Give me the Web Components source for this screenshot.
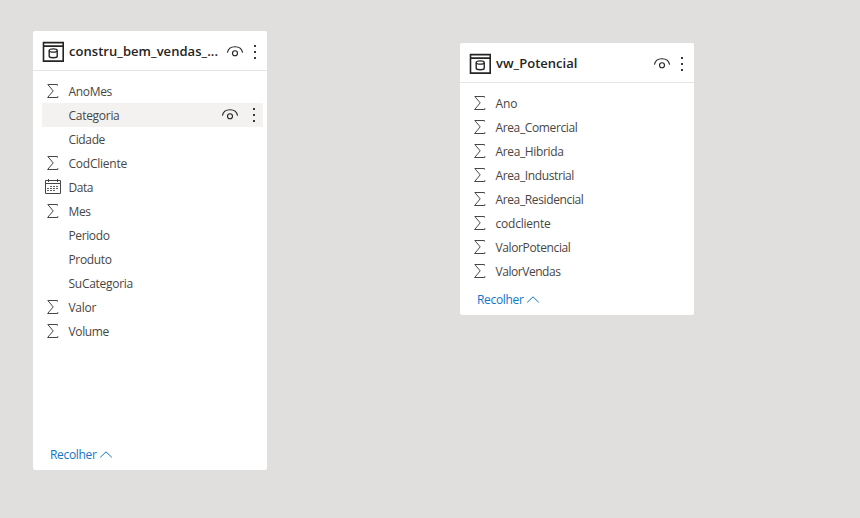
<!DOCTYPE html>
<html lang="pt">
<head>
<meta charset="utf-8">
<title>Modelo</title>
<style>
body{margin:0;background:#e0dfdd;height:518px;overflow:hidden;font-family:"Open Sans","Noto Sans",sans-serif;font-size:12px;color:#484644}
model-canvas{height:518px}
</style>
</head>
<body>
<model-canvas>
<table-card style="--x:33px;--y:31px;--h:439px" name="constru_bem_vendas_..." name-width="149">
<field-row kind="sum" w="43.5">AnoMes</field-row>
<field-row active w="51">Categoria</field-row>
<field-row w="36.5">Cidade</field-row>
<field-row kind="sum" w="58.5">CodCliente</field-row>
<field-row kind="date" w="24.5">Data</field-row>
<field-row kind="sum" w="22">Mes</field-row>
<field-row w="41">Periodo</field-row>
<field-row w="43">Produto</field-row>
<field-row w="64.5">SuCategoria</field-row>
<field-row kind="sum" w="27.5">Valor</field-row>
<field-row kind="sum" w="40.5">Volume</field-row>
</table-card>
<table-card style="--x:460px;--y:43px;--h:272px" name="vw_Potencial" name-width="81.5">
<field-row kind="sum" w="22">Ano</field-row>
<field-row kind="sum" w="82">Area_Comercial</field-row>
<field-row kind="sum" w="68">Area_Hibrida</field-row>
<field-row kind="sum" w="78.5">Area_Industrial</field-row>
<field-row kind="sum" w="88">Area_Residencial</field-row>
<field-row kind="sum" w="55">codcliente</field-row>
<field-row kind="sum" w="75">ValorPotencial</field-row>
<field-row kind="sum" w="65">ValorVendas</field-row>
</table-card>
</model-canvas>
<script>
const ICONS = {
  table: [22,22,'<g fill="none" stroke="#252423" stroke-width="1.6"><path d="M1.5 1.6H21.2V20.1H1.5ZM1.5 5.1H21.2"/><path stroke-width="1.4" d="M7.2 9.6V15.2C7.2 17.2 15.2 17.2 15.2 15.2V9.6"/><ellipse cx="11.2" cy="9.5" rx="4" ry="1.7" stroke-width="1.3"/></g>'],
  eye: [18,14,'<g fill="none" stroke="#252423" stroke-width="1.15"><path d="M1.4 7.7C3-.2 15-.2 16.6 7.7"/><circle cx="9" cy="8.2" r="2.5"/></g>'],
  dots: [4,16,'<path fill="#252423" d="M1.1 1h1.8v2H1.1zM1.1 7h1.8v2H1.1zM1.1 13h1.8v2H1.1z"/>'],
  sum: [16,16,'<path fill="none" stroke="#484644" d="M12.4 2.6V1.5H2.8L8.2 7.9 2.6 14.5H12.8V13.2"/>'],
  date: [18,16,'<g fill="none" stroke="#484644"><path d="M1.5 1.5H16.5V14.5H1.5ZM1.5 4.5H16.5M4.5 0V3M13.5 0V3"/><path stroke="#605e5c" stroke-dasharray="2 1" d="M6 7.5H14M3 9.5H14M3 11.5H12"/></g>'],
  up: [14,9,'<path fill="none" stroke="#1276c9" d="M1.2 7.4 7 1.8 12.8 7.4"/>']
};
class UiIcon extends HTMLElement {
  connectedCallback() {
    const [w,h,body] = ICONS[this.getAttribute('name')];
    this.attachShadow({mode:'open'}).innerHTML = `<style>:host{display:block;flex:none;width:${w}px;height:${h}px}svg{display:block}</style><svg width="${w}" height="${h}" viewBox="0 0 ${w} ${h}">${body}</svg>`;
  }
}
/* A label whose tracking is tuned so its text takes the given width. */
class FitLabel extends HTMLElement {
  connectedCallback() {
    this.attachShadow({mode:'open'}).innerHTML = '<style>:host{display:block;flex:none;white-space:nowrap}span{display:inline-block}</style><span></span>';
    const s = this.shadowRoot.querySelector('span');
    s.textContent = this.getAttribute('text');
    const gap = +this.getAttribute('w') - s.getBoundingClientRect().width;
    s.style.letterSpacing = gap / s.textContent.length + 'px';
  }
}
class FieldRow extends HTMLElement {
  connectedCallback() {
    const kind = this.getAttribute('kind'), active = this.hasAttribute('active');
    this.attachShadow({mode:'open'}).innerHTML = `<style>
      :host{display:flex;align-items:center;height:24px;margin:0 4px 0 9px;box-sizing:border-box;padding-right:7px}
      :host([active]){background:#f3f2f1}
      .kind{width:18px;margin:0 6.5px 0 2px;display:flex;justify-content:center}
      .grow{flex:1}.dots{margin-left:13px}
      </style><div class="kind">${kind ? `<ui-icon name="${kind}"></ui-icon>` : ''}</div>
      <fit-label text="${this.textContent}" w="${this.getAttribute('w')}"></fit-label>
      ${active ? '<div class="grow"></div><ui-icon name="eye"></ui-icon><ui-icon class="dots" name="dots"></ui-icon>' : ''}`;
  }
}
class TableCard extends HTMLElement {
  connectedCallback() {
    this.attachShadow({mode:'open'}).innerHTML = `<style>
      :host{position:absolute;left:var(--x);top:var(--y);width:234px;height:var(--h);background:#fff;border-radius:2px;display:flex;flex-direction:column}
      header{height:40px;box-sizing:border-box;border-bottom:1px solid #e6e5e4;display:flex;align-items:center;padding:2px 10px 0 9px;color:#252423;font-size:13px;font-weight:600}
      header fit-label{margin:0 0 2px 5px}.grow{flex:1}.dots{margin-left:9px}
      .rows{padding-top:8px;flex:1}
      footer{display:flex;align-items:center;height:24px;margin-bottom:4px;padding-left:17px;color:#1276c9}
      footer ui-icon{margin-left:2px}
      </style>
      <header><ui-icon name="table"></ui-icon><fit-label text="${this.getAttribute('name')}" w="${this.getAttribute('name-width')}"></fit-label><div class="grow"></div><ui-icon name="eye"></ui-icon><ui-icon class="dots" name="dots"></ui-icon></header>
      <div class="rows"><slot></slot></div>
      <footer><fit-label text="Recolher" w="46.5"></fit-label><ui-icon name="up"></ui-icon></footer>`;
  }
}
class ModelCanvas extends HTMLElement {
  connectedCallback() {
    this.attachShadow({mode:'open'}).innerHTML = '<style>:host{display:block;position:relative;background:#e0dfdd}</style><slot></slot>';
  }
}
customElements.define('ui-icon', UiIcon);
customElements.define('fit-label', FitLabel);
customElements.define('model-canvas', ModelCanvas);
customElements.define('table-card', TableCard);
customElements.define('field-row', FieldRow);
</script>
</body>
</html>
